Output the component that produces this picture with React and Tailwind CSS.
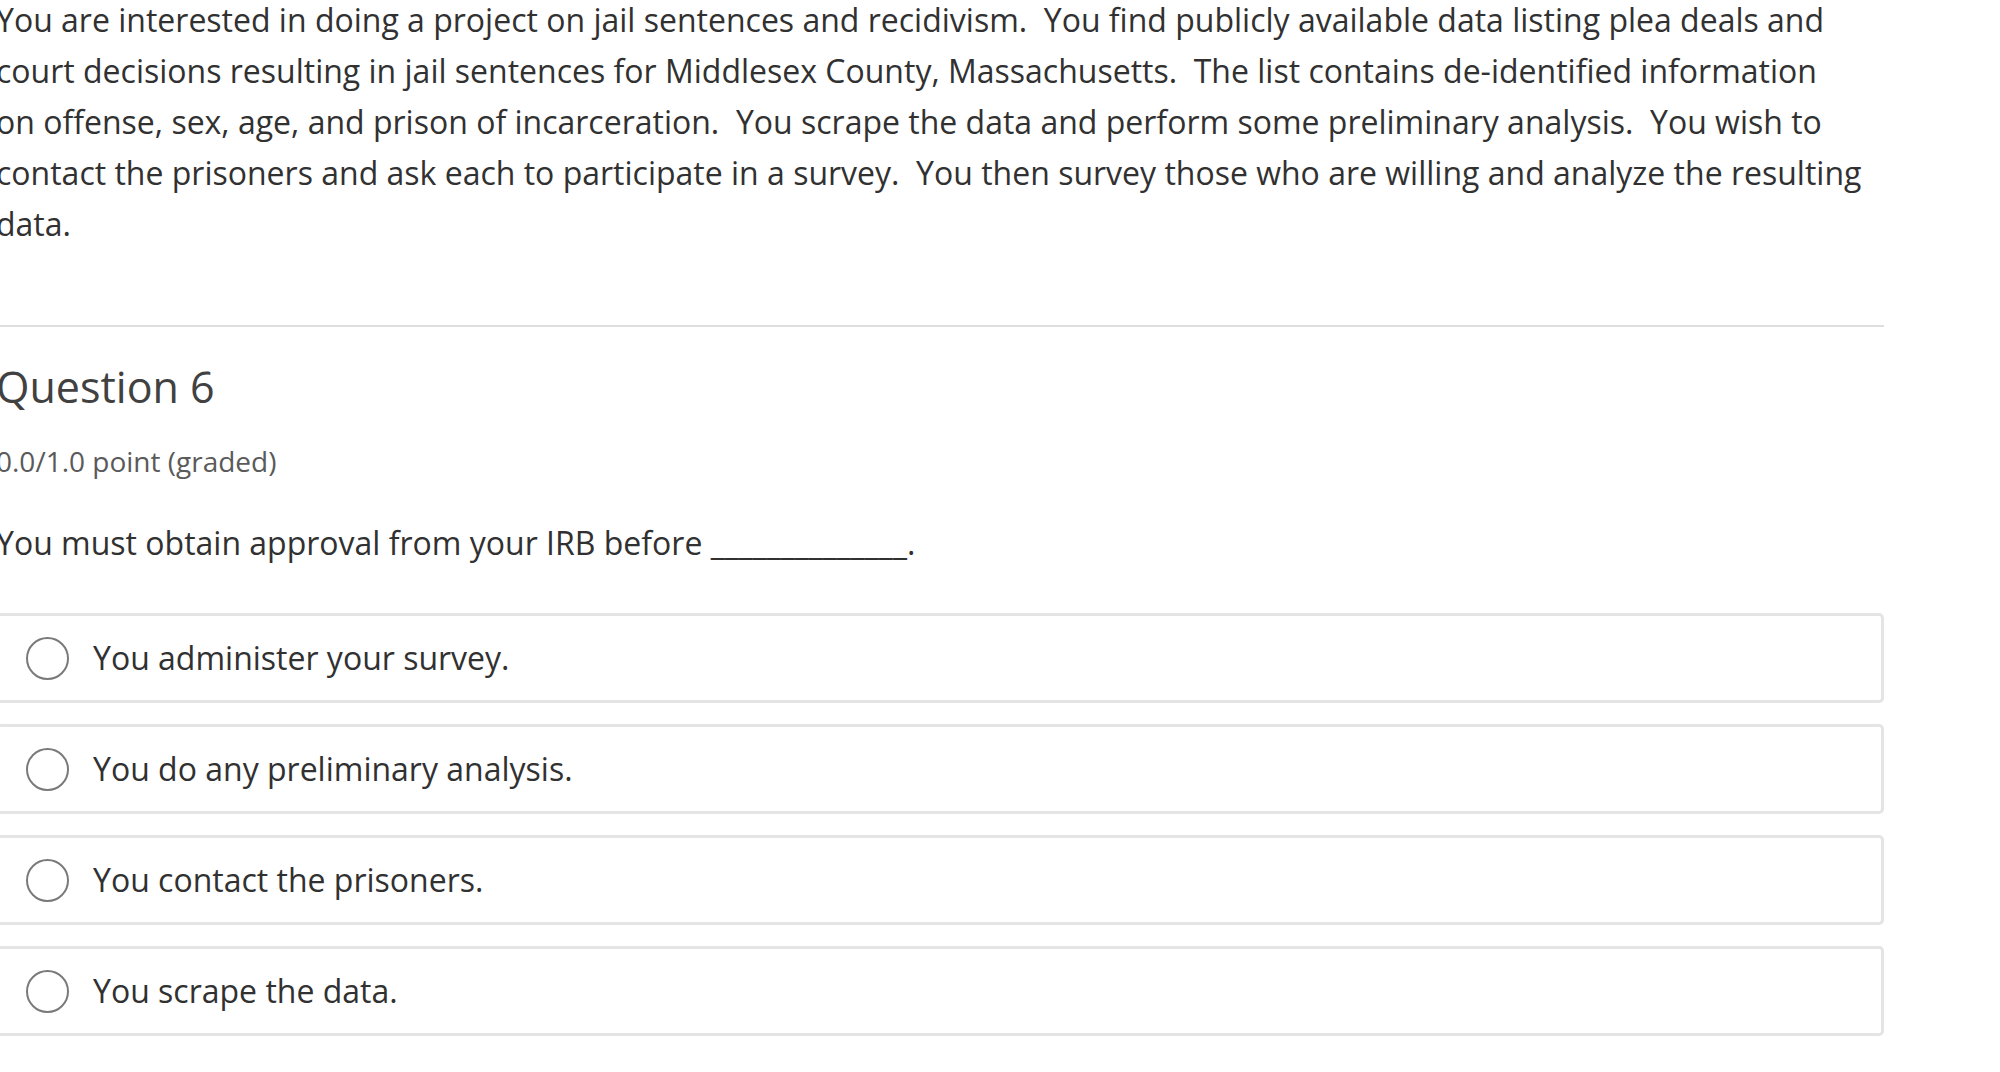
import React from 'react';

const options = [
    'You administer your survey.',
    'You do any preliminary analysis.',
    'You contact the prisoners.',
    'You scrape the data.',
];

function Option({ label }) {
    return (
        <label className="flex h-[90px] items-center rounded-[5px] border-[3px] border-[#e4e4e4] bg-white pl-[27px]">
            <span className="h-[43px] w-[43px] shrink-0 rounded-full border-2 border-[#7a7a7a] bg-white"></span>
            <span className="ml-[24px] text-[32px] leading-[44px] text-[#313131]">{label}</span>
        </label>
    );
}

export default function App() {
    return (
        <div className="min-h-screen bg-white overflow-hidden" style={{ fontFamily: '"Open Sans", "Noto Sans", sans-serif' }}>
            <div className="-ml-[4px] -mt-[6px] w-[1888px]">
                <p className="w-[1866px] text-[32px] leading-[51px] text-[#313131]">
                    You are interested in doing a project on jail sentences and recidivism.{'\u00a0'} You find publicly available data listing plea deals and
                    court decisions resulting in jail sentences for Middlesex County, Massachusetts.{'\u00a0'} The list contains de-identified information{' '}
                    <br />
                    on offense, sex, age, and prison of incarceration.{'\u00a0'} You scrape the data and perform some preliminary analysis.{'\u00a0'} You wish to
                    contact the prisoners and ask each to participate in a survey.{'\u00a0'} You then survey those who are willing and analyze the resulting
                    data.
                </p>

                <hr className="mt-[76px] border-0 border-t-2 border-[#dedede]" />

                {/* problem header */}
                <h3 className="mt-[35px] text-[43px] leading-[50px] text-[#414141]">Question 6</h3>
                <div className="mt-[28px] text-[28px] leading-[42px] text-[#5a5a5a]">0.0/1.0 point (graded)</div>

                <p className="mt-[35px] text-[32px] leading-[51px] text-[#313131]">
                    You must obtain approval from your IRB before ______________.
                </p>

                <div className="mt-[45px] flex flex-col gap-[21px]">
                    {options.map((o) => (
                        <Option key={o} label={o} />
                    ))}
                </div>
            </div>
        </div>
    );
}
